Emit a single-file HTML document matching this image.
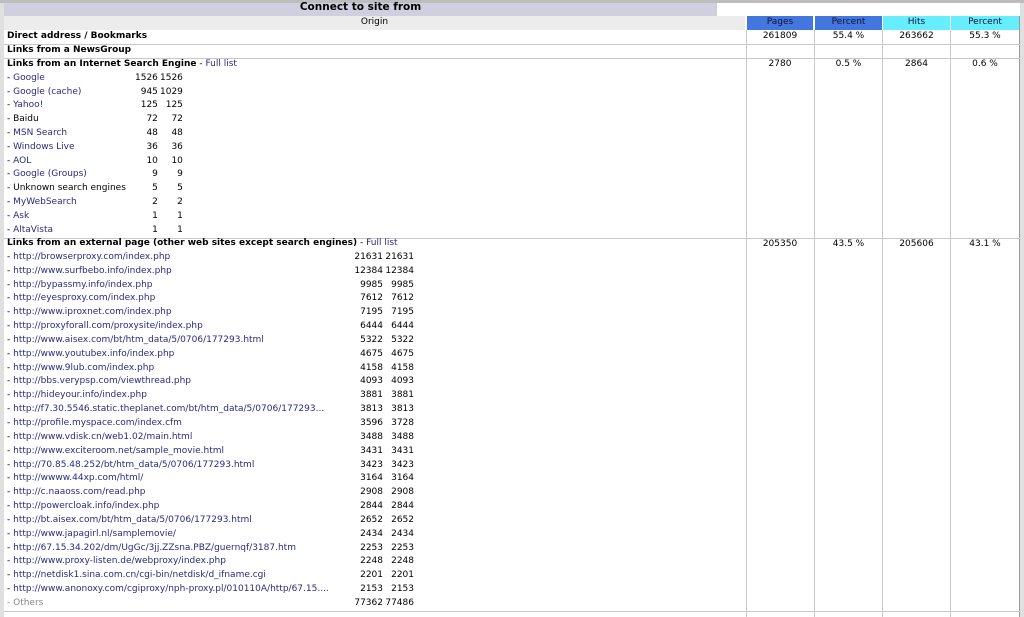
<!DOCTYPE html>
<html><head><style>
body{margin:0;width:1024px;height:617px;background:#fff;position:relative;overflow:hidden;font-family:"DejaVu Sans","Liberation Sans",sans-serif;font-size:9px;color:#000}
.a{position:absolute;white-space:nowrap;line-height:13.8px}
.l{color:#224;}
.lk{color:#2a2a80}
.hl{position:absolute;height:1px;background:#c8c8c8}
.vl{position:absolute;width:1px;background:#c8c8c8}
.r{text-align:right}
.c{text-align:center}
b{font-weight:bold}
</style></head><body>
<div style="position:absolute;left:0;top:0;width:1024px;height:3px;background:#bdbdbd"></div>
<div style="position:absolute;left:0;top:3px;width:4px;height:614px;background:#e0e0e0"></div>
<div style="position:absolute;left:1020px;top:3px;width:4px;height:614px;background:#e0e0e0"></div>
<div style="position:absolute;left:4px;top:3px;width:713px;height:13px;background:#cfcfdf"></div>
<div class="a c" style="left:4px;top:1px;width:713px;font-weight:bold;font-size:10.5px">Connect to site from</div>
<div style="position:absolute;left:4px;top:16px;width:741px;height:14px;background:#ececec"></div>
<div class="a c" style="left:4px;top:16px;width:741px">Origin</div>
<div class="a c" style="left:747px;top:16px;width:66px;height:14px;background:#4477dd;color:#113">Pages</div>
<div class="a c" style="left:815px;top:16px;width:67px;height:14px;background:#4477dd;color:#113">Percent</div>
<div class="a c" style="left:883px;top:16px;width:67px;height:14px;background:#66eeff;color:#113">Hits</div>
<div class="a c" style="left:951px;top:16px;width:68px;height:14px;background:#66eeff;color:#113">Percent</div>
<div class="vl" style="left:746px;top:30px;height:587px"></div>
<div class="vl" style="left:814px;top:30px;height:587px"></div>
<div class="vl" style="left:882px;top:30px;height:587px"></div>
<div class="vl" style="left:950px;top:30px;height:587px"></div>
<div class="vl" style="left:1019px;top:16px;height:601px;background:#999"></div>
<div class="hl" style="left:4px;top:44px;width:1016px"></div>
<div class="hl" style="left:4px;top:58px;width:1016px"></div>
<div class="hl" style="left:4px;top:238px;width:1016px"></div>
<div class="hl" style="left:4px;top:611px;width:1016px"></div>
<div class="a" style="left:7px;top:30px"><b>Direct address / Bookmarks</b></div>
<div class="a" style="left:7px;top:44px"><b>Links from a NewsGroup</b></div>
<div class="a c" style="left:747px;top:30px;width:66px">261809</div>
<div class="a c" style="left:815px;top:30px;width:67px">55.4 %</div>
<div class="a c" style="left:883px;top:30px;width:67px">263662</div>
<div class="a c" style="left:951px;top:30px;width:68px">55.3 %</div>
<div class="a c" style="left:747px;top:58px;width:66px">2780</div>
<div class="a c" style="left:815px;top:58px;width:67px">0.5 %</div>
<div class="a c" style="left:883px;top:58px;width:67px">2864</div>
<div class="a c" style="left:951px;top:58px;width:68px">0.6 %</div>
<div class="a c" style="left:747px;top:238px;width:66px">205350</div>
<div class="a c" style="left:815px;top:238px;width:67px">43.5 %</div>
<div class="a c" style="left:883px;top:238px;width:67px">205606</div>
<div class="a c" style="left:951px;top:238px;width:68px">43.1 %</div>
<div style="position:absolute;left:7px;top:58px;line-height:13.8px;white-space:nowrap">
<div><b>Links from an Internet Search Engine</b> - <span class="lk">Full list</span></div>
<table style="border-collapse:collapse;font-size:9px;line-height:13.8px" cellpadding="0">
<tr><td style="width:128px">- <span class="lk">Google</span></td><td class="r" style="width:22px">1526</td><td class="r" style="width:25px">1526</td></tr>
<tr><td>- <span class="lk">Google (cache)</span></td><td class="r">945</td><td class="r">1029</td></tr>
<tr><td>- <span class="lk">Yahoo!</span></td><td class="r">125</td><td class="r">125</td></tr>
<tr><td>- Baidu</td><td class="r">72</td><td class="r">72</td></tr>
<tr><td>- <span class="lk">MSN Search</span></td><td class="r">48</td><td class="r">48</td></tr>
<tr><td>- <span class="lk">Windows Live</span></td><td class="r">36</td><td class="r">36</td></tr>
<tr><td>- <span class="lk">AOL</span></td><td class="r">10</td><td class="r">10</td></tr>
<tr><td>- <span class="lk">Google (Groups)</span></td><td class="r">9</td><td class="r">9</td></tr>
<tr><td>- Unknown search engines</td><td class="r">5</td><td class="r">5</td></tr>
<tr><td>- <span class="lk">MyWebSearch</span></td><td class="r">2</td><td class="r">2</td></tr>
<tr><td>- <span class="lk">Ask</span></td><td class="r">1</td><td class="r">1</td></tr>
<tr><td>- <span class="lk">AltaVista</span></td><td class="r">1</td><td class="r">1</td></tr>
</table></div>
<div style="position:absolute;left:7px;top:237px;line-height:13.85px;white-space:nowrap">
<div><b>Links from an external page (other web sites except search engines)</b> - <span class="lk">Full list</span></div>
<table style="border-collapse:collapse;font-size:9px;line-height:13.85px" cellpadding="0">
<tr><td style="width:346px">- <span class="lk">http://browserproxy.com/index.php</span></td><td class="r" style="width:30px">21631</td><td class="r" style="width:31px">21631</td></tr>
<tr><td>- <span class="lk">http://www.surfbebo.info/index.php</span></td><td class="r">12384</td><td class="r">12384</td></tr>
<tr><td>- <span class="lk">http://bypassmy.info/index.php</span></td><td class="r">9985</td><td class="r">9985</td></tr>
<tr><td>- <span class="lk">http://eyesproxy.com/index.php</span></td><td class="r">7612</td><td class="r">7612</td></tr>
<tr><td>- <span class="lk">http://www.iproxnet.com/index.php</span></td><td class="r">7195</td><td class="r">7195</td></tr>
<tr><td>- <span class="lk">http://proxyforall.com/proxysite/index.php</span></td><td class="r">6444</td><td class="r">6444</td></tr>
<tr><td>- <span class="lk">http://www.aisex.com/bt/htm_data/5/0706/177293.html</span></td><td class="r">5322</td><td class="r">5322</td></tr>
<tr><td>- <span class="lk">http://www.youtubex.info/index.php</span></td><td class="r">4675</td><td class="r">4675</td></tr>
<tr><td>- <span class="lk">http://www.9lub.com/index.php</span></td><td class="r">4158</td><td class="r">4158</td></tr>
<tr><td>- <span class="lk">http://bbs.verypsp.com/viewthread.php</span></td><td class="r">4093</td><td class="r">4093</td></tr>
<tr><td>- <span class="lk">http://hideyour.info/index.php</span></td><td class="r">3881</td><td class="r">3881</td></tr>
<tr><td>- <span class="lk">http://f7.30.5546.static.theplanet.com/bt/htm_data/5/0706/177293...</span></td><td class="r">3813</td><td class="r">3813</td></tr>
<tr><td>- <span class="lk">http://profile.myspace.com/index.cfm</span></td><td class="r">3596</td><td class="r">3728</td></tr>
<tr><td>- <span class="lk">http://www.vdisk.cn/web1.02/main.html</span></td><td class="r">3488</td><td class="r">3488</td></tr>
<tr><td>- <span class="lk">http://www.exciteroom.net/sample_movie.html</span></td><td class="r">3431</td><td class="r">3431</td></tr>
<tr><td>- <span class="lk">http://70.85.48.252/bt/htm_data/5/0706/177293.html</span></td><td class="r">3423</td><td class="r">3423</td></tr>
<tr><td>- <span class="lk">http://wwww.44xp.com/html/</span></td><td class="r">3164</td><td class="r">3164</td></tr>
<tr><td>- <span class="lk">http://c.naaoss.com/read.php</span></td><td class="r">2908</td><td class="r">2908</td></tr>
<tr><td>- <span class="lk">http://powercloak.info/index.php</span></td><td class="r">2844</td><td class="r">2844</td></tr>
<tr><td>- <span class="lk">http://bt.aisex.com/bt/htm_data/5/0706/177293.html</span></td><td class="r">2652</td><td class="r">2652</td></tr>
<tr><td>- <span class="lk">http://www.japagirl.nl/samplemovie/</span></td><td class="r">2434</td><td class="r">2434</td></tr>
<tr><td>- <span class="lk">http://67.15.34.202/dm/UgGc/3jj.ZZsna.PBZ/guernqf/3187.htm</span></td><td class="r">2253</td><td class="r">2253</td></tr>
<tr><td>- <span class="lk">http://www.proxy-listen.de/webproxy/index.php</span></td><td class="r">2248</td><td class="r">2248</td></tr>
<tr><td>- <span class="lk">http://netdisk1.sina.com.cn/cgi-bin/netdisk/d_ifname.cgi</span></td><td class="r">2201</td><td class="r">2201</td></tr>
<tr><td>- <span class="lk">http://www.anonoxy.com/cgiproxy/nph-proxy.pl/010110A/http/67.15....</span></td><td class="r">2153</td><td class="r">2153</td></tr>
<tr><td style="color:#888">- Others</td><td class="r">77362</td><td class="r">77486</td></tr>
</table></div>
</body></html>
